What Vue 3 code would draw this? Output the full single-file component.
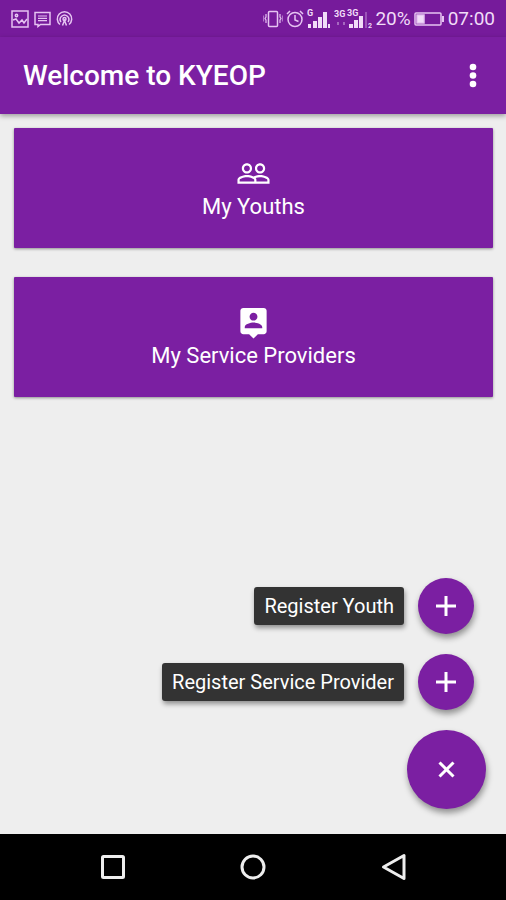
<template>
    <div class="screen">
        <div class="statusBar">
            <div class="statusGroup notifications">
                <svg width="18" height="18" viewBox="0 0 18 18" class="line">
                    <rect x="1" y="1" width="16" height="16" />
                    <circle cx="5.5" cy="5.5" r="1.2" />
                    <path d="M2 10l3-1 3 4 3-3 2 3 3-4" />
                </svg>
                <svg width="17" height="18" viewBox="0 0 17 18" class="line">
                    <path d="M1 2.500h15v12H6.500L4 16.500v-2H1z" />
                    <path d="M4 6h9M4 8.300h9M4 10.600h9" stroke-width="1.200" />
                </svg>
                <svg width="17" height="18" viewBox="0 0 17 18" class="line">
                    <path d="M4 14.500a7.200 7.200 0 1 1 9 0" />
                    <path d="M5 12a4.300 4.300 0 1 1 7 0" />
                    <circle cx="8.500" cy="9" r="1.500" />
                    <path d="M6.500 15.500l2-5 2 5" />
                </svg>
            </div>
            <div class="statusGroup">
                <svg width="20" height="18" viewBox="0 0 20 18" class="line">
                    <rect x="5.500" y="1.500" width="9" height="15" rx="1" />
                    <path d="M3 4v3l-1 1.500 1 1.500v3M17 4v3l1 1.500-1 1.500v3" stroke-width="1.200" />
                    <path d="M.6 5.500v6M19.400 5.500v6" stroke-width="1" opacity=".6" />
                </svg>
                <svg width="18" height="18" viewBox="0 0 18 18" class="line">
                    <circle cx="9" cy="9.500" r="7" />
                    <path d="M9 5v5l3.500 1.500M1 4l3-3M17 4l-3-3" />
                </svg>
                <svg width="24" height="20" viewBox="0 0 24 20" class="solid">
                    <text x="0" y="7">G</text>
                    <path d="M1 15h3v4H1zM6 12h4v7H6zM11 8h4v11h-4zM16 3h4v16h-4zM21 15h2v4h-2z" />
                </svg>
                <svg width="38" height="20" viewBox="0 0 38 20" class="solid">
                    <text x="0" y="8">3G</text>
                    <text x="13" y="7">3G</text>
                    <path d="M3 13h2v3H3zM9 13h2v3H9z" opacity=".4" />
                    <path d="M15 15h4v4h-4zM20 11h4v8h-4zM25 7h4v12h-4z" />
                    <path d="M31 3h2v16h-2z" opacity=".3" />
                    <text x="34" y="19" class="simNumber">2</text>
                </svg>
                <span class="percent">20%</span>
                <svg width="31" height="16" viewBox="0 0 31 16" class="line">
                    <rect x="1" y="2" width="26" height="12" rx="1" />
                    <path d="M3 4h7v8H3z" fill="#f1dcf8" />
                    <path d="M29 5v6" stroke-width="2" />
                </svg>
                <span class="clock">07:00</span>
            </div>
        </div>

        <header class="appBar">
            <h1>Welcome to KYEOP</h1>
            <button class="menuButton" aria-label="More options">
                <svg width="8" height="26" viewBox="0 0 8 26" fill="#fff">
                    <circle cx="4" cy="4" r="3.300" />
                    <circle cx="4" cy="12.500" r="3.300" />
                    <circle cx="4" cy="21" r="3.300" />
                </svg>
            </button>
        </header>

        <main class="content">
            <button v-for="card in cards" :key="card.label" class="card">
                <svg width="35" height="35" viewBox="0 0 24 24" fill="#fff">
                    <path :d="card.icon" />
                </svg>
                <span>{{ card.label }}</span>
            </button>

            <div class="fabMenu">
                <template v-if="open">
                    <div v-for="action in actions" :key="action.id" class="fabRow">
                        <label :for="action.id" class="fabLabel">{{ action.label }}</label>
                        <button :id="action.id" class="fab mini">
                            <svg width="20" height="20" viewBox="0 0 20 20">
                                <path d="M10 0v20M0 10h20" stroke="#fff" stroke-width="3" />
                            </svg>
                        </button>
                    </div>
                </template>
                <button class="fab" aria-label="Toggle actions" @click="open = !open">
                    <svg width="17" height="17" viewBox="0 0 17 17" :class="{ closed: !open }">
                        <path d="M1.500 1.500l14 14M15.500 1.500l-14 14" stroke="#fff" stroke-width="3" />
                    </svg>
                </button>
            </div>
        </main>

        <nav class="navBar">
            <button aria-label="Recent apps">
                <svg width="28" height="28" viewBox="0 0 28 28">
                    <rect x="3.500" y="3.500" width="21" height="21" rx="1" />
                </svg>
            </button>
            <button aria-label="Home">
                <svg width="28" height="28" viewBox="0 0 28 28">
                    <circle cx="14" cy="14" r="11" />
                </svg>
            </button>
            <button aria-label="Back">
                <svg width="28" height="28" viewBox="0 0 28 28">
                    <path d="M25 2.500v23L4.500 14z" />
                </svg>
            </button>
        </nav>
    </div>
</template>

<script setup>
import { ref } from "vue";

const open = ref(true);

const cards = [
    {
        label: "My Youths",
        icon: "M16.500 13c-1.200 0-3.070.340-4.500 1-1.430-.670-3.300-1-4.500-1C5.330 13 1 14.080 1 16.250V19h22v-2.750c0-2.170-4.330-3.250-6.500-3.250zm-4 4.500h-10v-1.250c0-.540 2.560-1.750 5-1.750s5 1.210 5 1.750v1.250zm9 0H14v-1.250c0-.460-.2-.860-.520-1.220.880-.3 1.960-.530 3.020-.530 2.440 0 5 1.210 5 1.750v1.250zM7.500 12c1.930 0 3.500-1.570 3.500-3.500S9.430 5 7.500 5 4 6.570 4 8.500 5.570 12 7.500 12zm0-5.500c1.100 0 2 .9 2 2s-.9 2-2 2-2-.9-2-2 .9-2 2-2zm9 5.500c1.930 0 3.500-1.570 3.500-3.500S18.430 5 16.500 5 13 6.570 13 8.500s1.570 3.500 3.500 3.500zm0-5.500c1.100 0 2 .9 2 2s-.9 2-2 2-2-.9-2-2 .9-2 2-2z",
    },
    {
        label: "My Service Providers",
        icon: "M19 2H5c-1.110 0-2 .9-2 2v14c0 1.100.890 2 2 2h4l3 3 3-3h4c1.100 0 2-.9 2-2V4c0-1.100-.9-2-2-2zm-7 3.300c1.490 0 2.700 1.210 2.700 2.700 0 1.490-1.210 2.700-2.700 2.700-1.490 0-2.700-1.210-2.700-2.700 0-1.490 1.210-2.700 2.700-2.700zM18 16H6v-.9c0-2 4-3.100 6-3.100s6 1.100 6 3.100v.9z",
    },
];

const actions = [
    { id: "registerYouth", label: "Register Youth" },
    { id: "registerProvider", label: "Register Service Provider" },
];
</script>

<style>
body {
    margin: 0;
    background: #eee;
}
</style>

<style scoped>
.screen {
    display: flex;
    flex-direction: column;
    min-height: 100vh;
    background: #eee;
    color: #fff;
    font-family: Roboto, "Liberation Sans", sans-serif;
}
button {
    padding: 0;
    border: 0;
    background: transparent;
    color: inherit;
    font-family: inherit;
    cursor: pointer;
}
svg {
    display: block;
    flex: none;
}

.statusBar {
    display: flex;
    align-items: center;
    justify-content: space-between;
    height: 37px;
    padding: 0 11px;
    background: #761b9b;
    color: #f1dcf8;
    font-size: 19px;
}
.statusGroup {
    display: flex;
    align-items: center;
    gap: 3px;
}
.notifications {
    gap: 5px;
}
.line {
    fill: none;
    stroke: #e6c4f2;
    stroke-width: 1.5;
}
.solid {
    fill: #f1dcf8;
    font-size: 9px;
    font-weight: 700;
}
.simNumber {
    font-size: 7px;
}

.appBar {
    display: flex;
    align-items: center;
    justify-content: space-between;
    height: 77px;
    padding: 0 23px;
    background: #7b1fa2;
    box-shadow: 0 2px 5px rgba(0, 0, 0, 0.35);
}
.appBar h1 {
    margin: 0;
    font-size: 28px;
    font-weight: 500;
}
.menuButton {
    padding: 6px;
}

.content {
    display: flex;
    flex: 1;
    flex-direction: column;
    padding: 14px 13px 25px 14px;
}
.card {
    display: flex;
    flex-direction: column;
    align-items: center;
    height: 120px;
    margin-bottom: 29px;
    padding-top: 28px;
    border-radius: 1px;
    background: #7b1fa2;
    box-shadow: 0 1px 3px rgba(0, 0, 0, 0.4);
    font-size: 22px;
    line-height: 32px;
}

.fabMenu {
    display: flex;
    flex-direction: column;
    align-items: flex-end;
    gap: 20px;
    margin-top: auto;
    padding-right: 7px;
}
.fabRow {
    display: flex;
    align-items: center;
    gap: 14px;
    padding-right: 12px;
}
.fabLabel {
    padding: 1px 10px 0;
    border-radius: 3px;
    background: #333;
    box-shadow: 1px 3px 5px rgba(0, 0, 0, 0.4);
    font-size: 20px;
    line-height: 37px;
    cursor: pointer;
}
.fab {
    display: flex;
    align-items: center;
    justify-content: center;
    width: 79px;
    height: 79px;
    border-radius: 50%;
    background: #7b1fa2;
    box-shadow: 1px 4px 6px rgba(0, 0, 0, 0.4);
}
.fab.mini {
    width: 56px;
    height: 56px;
}
.closed {
    transform: rotate(45deg);
}

.navBar {
    display: flex;
    align-items: center;
    justify-content: space-around;
    height: 66px;
    padding: 0 43px;
    background: #000;
}
.navBar svg {
    fill: none;
    stroke: #eee;
    stroke-width: 3;
    stroke-linejoin: round;
}
</style>
